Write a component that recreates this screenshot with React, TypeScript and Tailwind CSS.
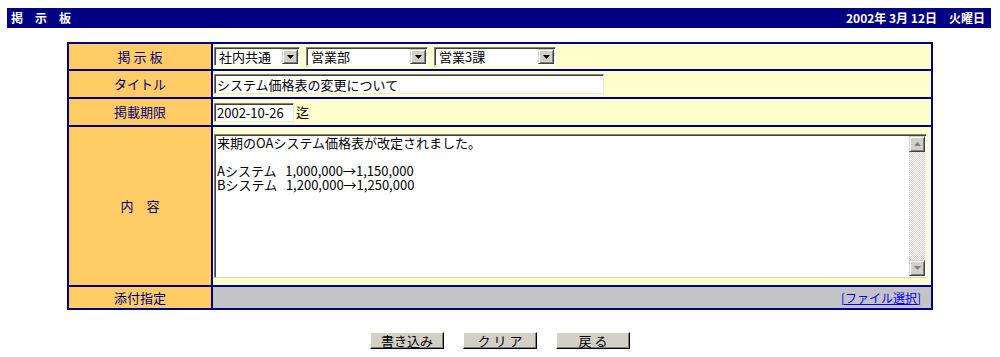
const FONT = "font-['Noto_Sans_CJK_JP','Liberation_Sans',sans-serif]";

function Arrow({ up = false, dim = false }: { up?: boolean; dim?: boolean }) {
  return (
    <svg width="7" height="4" viewBox="0 0 7 4" className="block">
      <path d={up ? "M0 4 L3.5 0 L7 4 Z" : "M0 0 L7 0 L3.5 4 Z"} fill={dim ? "#808080" : "#000"} />
    </svg>
  );
}

function ArrowButton({ up = false, dim = false }: { up?: boolean; dim?: boolean }) {
  return (
    <div className="w-[16px] h-full flex items-center justify-center bg-[#d4d0c8] border border-t-[#d4d0c8] border-l-[#d4d0c8] border-r-[#404040] border-b-[#404040] shadow-[inset_1px_1px_0_#ffffff,inset_-1px_-1px_0_#808080]">
      <Arrow up={up} dim={dim} />
    </div>
  );
}

function Select({ value, className }: { value: string; className: string }) {
  return (
    <div
      className={`h-[19px] flex items-stretch bg-white border border-t-[#808080] border-l-[#808080] border-r-[#ffffff] border-b-[#ffffff] shadow-[inset_1px_1px_0_#404040] p-[1px] ${className}`}
    >
      <span className="flex-1 pl-[3px] text-[13px] leading-[15px] text-black">{value}</span>
      <ArrowButton />
    </div>
  );
}

function TextBox({ value, className }: { value: string; className: string }) {
  return (
    <div
      className={`h-[19px] flex items-center bg-white border border-t-[#808080] border-l-[#808080] border-r-[#e8e8e8] border-b-[#e8e8e8] shadow-[inset_1px_1px_0_#404040] pl-[2px] text-[13px] leading-[15px] text-black ${className}`}
    >
      {value}
    </div>
  );
}

function Label({ children }: { children: string }) {
  return (
    <div className="bg-[#ffcc66] flex items-center justify-center text-[13px] text-[#000080]">
      {children}
    </div>
  );
}

function Button({ children }: { children: string }) {
  return (
    <button className="w-[74px] h-[17px] flex items-center justify-center bg-[#d4d0c8] text-[13px] leading-[13px] text-black border border-t-[#ffffff] border-l-[#ffffff] border-r-[#000000] border-b-[#000000] shadow-[inset_-1px_-1px_0_#808080]">
      {children}
    </button>
  );
}

const body = `来期のOAシステム価格表が改定されました。

Aシステム   1,000,000→1,150,000
Bシステム   1,200,000→1,250,000`;

export default function App() {
  return (
    <div className={`w-[1000px] h-[357px] bg-white ${FONT}`}>
      <div className="ml-[7px] mt-[8px] w-[984px] h-[20px] bg-[#000080] flex items-center justify-between pl-[4px] pr-[6px] text-white font-bold text-[12px] leading-[12px]">
        <span>掲　示　板</span>
        <span>2002年 3月 12日　火曜日</span>
      </div>

      <div className="ml-[67px] mt-[14px] w-[866px] bg-[#000080] p-[2px] grid grid-cols-[142px_1fr] grid-rows-[25px_26px_26px_158px_21px] gap-[2px]">
        <Label>掲 示 板</Label>
        <div className="bg-[#ffffcc] flex items-center pl-[1px] gap-[6px]">
          <Select value="社内共通" className="w-[86px]" />
          <Select value="営業部" className="w-[122px]" />
          <Select value="営業3課" className="w-[122px]" />
        </div>

        <Label>タイトル</Label>
        <div className="bg-[#ffffcc] flex items-center pl-[1px]">
          <TextBox value="システム価格表の変更について" className="w-[390px] h-[20px]" />
        </div>

        <Label>掲載期限</Label>
        <div className="bg-[#ffffcc] flex items-center pl-[1px] gap-[2px]">
          <TextBox value="2002-10-26" className="w-[80px]" />
          <span className="text-[13px] text-black">迄</span>
        </div>

        <Label>内　容</Label>
        <div className="bg-[#ffffcc] flex items-center pl-[1px] pr-[4px]">
          <div className="w-full h-[144px] flex bg-white border border-t-[#808080] border-l-[#808080] border-r-[#ffffff] border-b-[#d4d0c8] shadow-[inset_1px_1px_0_#404040] p-[1px]">
            <textarea
              readOnly
              value={body}
              className={`flex-1 resize-none outline-none bg-white text-black text-[13px] leading-[14px] pl-[1px] pt-0 ${FONT}`}
            />
            <div className="w-[16px] flex flex-col bg-[repeating-conic-gradient(#ffffff_0_25%,#d4d0c8_0_50%)] bg-[length:2px_2px]">
              <div className="h-[16px]">
                <ArrowButton up dim />
              </div>
              <div className="flex-1" />
              <div className="h-[16px]">
                <ArrowButton dim />
              </div>
            </div>
          </div>
        </div>

        <Label>添付指定</Label>
        <div className="bg-[#c4c3c6] flex items-center justify-end pr-[10px]">
          <a href="#" className="text-[12px] leading-[14px] text-[#0000ff] underline">
            [ファイル選択]
          </a>
        </div>
      </div>

      <div className="mt-[22px] flex justify-center gap-[19px]">
        <Button>書き込み</Button>
        <Button>ク リ ア</Button>
        <Button>戻 る</Button>
      </div>
    </div>
  );
}
